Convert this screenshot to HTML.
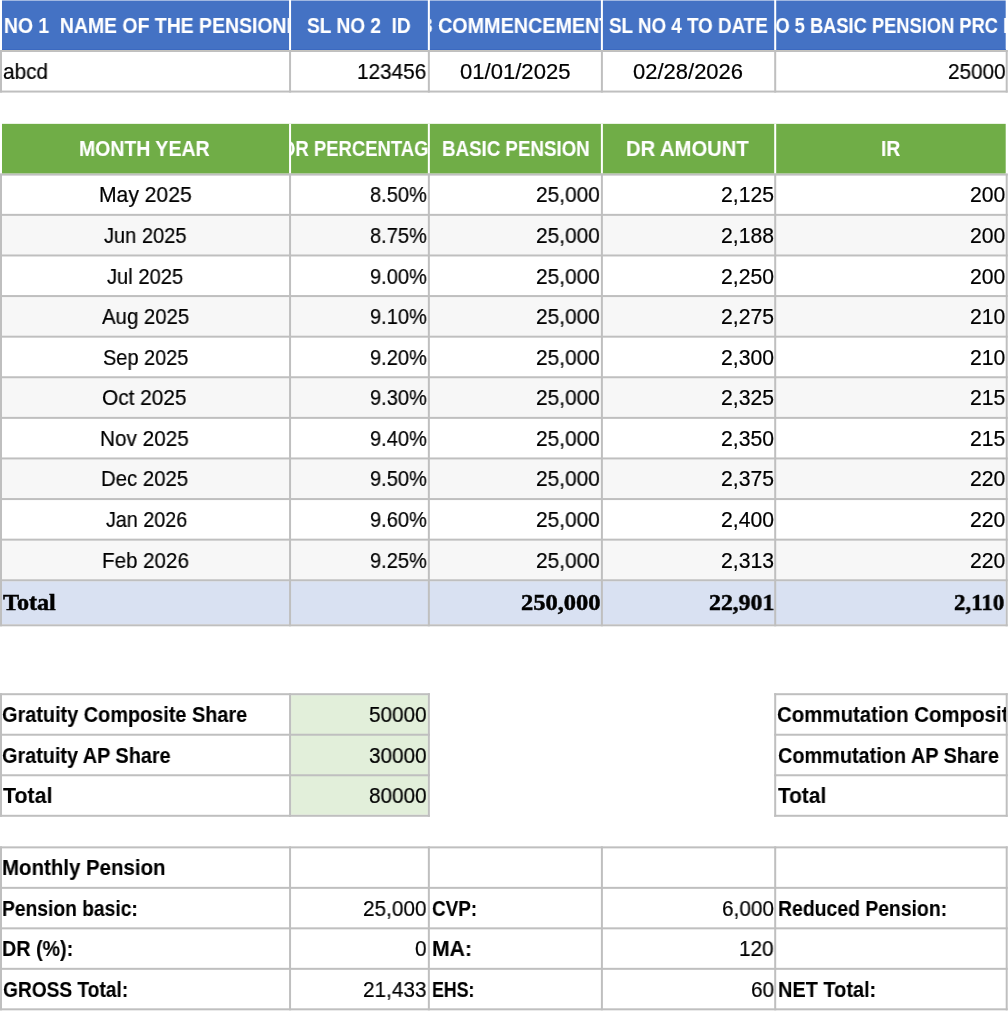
<!DOCTYPE html>
<html><head><meta charset="utf-8"><style>
html,body{margin:0;padding:0;background:#fff;width:1008px;height:1011px;overflow:hidden;position:relative;font-family:"Liberation Sans",sans-serif}
.c{position:absolute;overflow:hidden}
.t{position:absolute;white-space:pre;will-change:transform;transform-origin:0 0}
.m{display:inline-block;width:0;height:0}
</style></head><body>
<svg width="1008" height="1011" style="position:absolute;left:0;top:0"><rect x="2.00" y="0.50" width="1003.70" height="49.50" fill="#4472c4"/><rect x="2.00" y="49.00" width="1003.70" height="1.00" fill="#3b69c0"/><rect x="289.05" y="0.00" width="2.00" height="50.00" fill="#fff"/><rect x="427.85" y="0.00" width="2.00" height="50.00" fill="#fff"/><rect x="600.90" y="0.00" width="2.00" height="50.00" fill="#fff"/><rect x="774.20" y="0.00" width="2.00" height="50.00" fill="#fff"/><rect x="0.00" y="50.00" width="1007.70" height="1.00" fill="#c6c4be"/><rect x="0.00" y="51.00" width="1007.70" height="1.00" fill="#bfbfbf"/><rect x="0.00" y="90.56" width="1007.70" height="2.00" fill="#bfbfbf"/><rect x="0.00" y="50.00" width="2.00" height="42.56" fill="#bfbfbf"/><rect x="289.05" y="50.00" width="2.00" height="42.56" fill="#bfbfbf"/><rect x="427.85" y="50.00" width="2.00" height="42.56" fill="#bfbfbf"/><rect x="600.90" y="50.00" width="2.00" height="42.56" fill="#bfbfbf"/><rect x="774.20" y="50.00" width="2.00" height="42.56" fill="#bfbfbf"/><rect x="1005.70" y="50.00" width="2.00" height="42.56" fill="#bfbfbf"/><rect x="2.00" y="123.85" width="1003.70" height="49.75" fill="#70ad47"/><rect x="289.05" y="123.85" width="2.00" height="49.75" fill="#fff"/><rect x="427.85" y="123.85" width="2.00" height="49.75" fill="#fff"/><rect x="600.90" y="123.85" width="2.00" height="49.75" fill="#fff"/><rect x="774.20" y="123.85" width="2.00" height="49.75" fill="#fff"/><rect x="2.00" y="215.86" width="1003.70" height="38.60" fill="#f7f7f7"/><rect x="2.00" y="297.06" width="1003.70" height="38.60" fill="#f7f7f7"/><rect x="2.00" y="378.26" width="1003.70" height="38.60" fill="#f7f7f7"/><rect x="2.00" y="459.46" width="1003.70" height="38.60" fill="#f7f7f7"/><rect x="2.00" y="540.66" width="1003.70" height="38.60" fill="#f7f7f7"/><rect x="2.00" y="581.26" width="1003.70" height="43.04" fill="#d9e1f2"/><rect x="0.00" y="173.60" width="1007.70" height="2.00" fill="#bfbfbf"/><rect x="0.00" y="213.86" width="1007.70" height="2.00" fill="#bfbfbf"/><rect x="0.00" y="254.46" width="1007.70" height="2.00" fill="#bfbfbf"/><rect x="0.00" y="295.06" width="1007.70" height="2.00" fill="#bfbfbf"/><rect x="0.00" y="335.66" width="1007.70" height="2.00" fill="#bfbfbf"/><rect x="0.00" y="376.26" width="1007.70" height="2.00" fill="#bfbfbf"/><rect x="0.00" y="416.86" width="1007.70" height="2.00" fill="#bfbfbf"/><rect x="0.00" y="457.46" width="1007.70" height="2.00" fill="#bfbfbf"/><rect x="0.00" y="498.06" width="1007.70" height="2.00" fill="#bfbfbf"/><rect x="0.00" y="538.66" width="1007.70" height="2.00" fill="#bfbfbf"/><rect x="0.00" y="579.26" width="1007.70" height="2.00" fill="#bfbfbf"/><rect x="0.00" y="624.30" width="1007.70" height="2.00" fill="#bfbfbf"/><rect x="0.00" y="173.60" width="2.00" height="452.70" fill="#bfbfbf"/><rect x="289.05" y="173.60" width="2.00" height="452.70" fill="#bfbfbf"/><rect x="427.85" y="173.60" width="2.00" height="452.70" fill="#bfbfbf"/><rect x="600.90" y="173.60" width="2.00" height="452.70" fill="#bfbfbf"/><rect x="774.20" y="173.60" width="2.00" height="452.70" fill="#bfbfbf"/><rect x="1005.70" y="173.60" width="2.00" height="452.70" fill="#bfbfbf"/><rect x="291.05" y="695.20" width="136.80" height="119.59" fill="#e2efda"/><rect x="0.00" y="693.20" width="429.85" height="2.00" fill="#bfbfbf"/><rect x="774.20" y="693.20" width="233.50" height="2.00" fill="#bfbfbf"/><rect x="0.00" y="733.73" width="429.85" height="2.00" fill="#bfbfbf"/><rect x="774.20" y="733.73" width="233.50" height="2.00" fill="#bfbfbf"/><rect x="0.00" y="774.26" width="429.85" height="2.00" fill="#bfbfbf"/><rect x="774.20" y="774.26" width="233.50" height="2.00" fill="#bfbfbf"/><rect x="0.00" y="814.79" width="429.85" height="2.00" fill="#bfbfbf"/><rect x="774.20" y="814.79" width="233.50" height="2.00" fill="#bfbfbf"/><rect x="0.00" y="693.20" width="2.00" height="123.59" fill="#bfbfbf"/><rect x="289.05" y="693.20" width="2.00" height="123.59" fill="#bfbfbf"/><rect x="427.85" y="693.20" width="2.00" height="123.59" fill="#bfbfbf"/><rect x="774.20" y="693.20" width="2.00" height="123.59" fill="#bfbfbf"/><rect x="1005.70" y="693.20" width="2.00" height="123.59" fill="#bfbfbf"/><rect x="0.00" y="846.36" width="1007.70" height="2.00" fill="#bfbfbf"/><rect x="0.00" y="886.85" width="1007.70" height="2.00" fill="#bfbfbf"/><rect x="0.00" y="927.34" width="1007.70" height="2.00" fill="#bfbfbf"/><rect x="0.00" y="967.83" width="1007.70" height="2.00" fill="#bfbfbf"/><rect x="0.00" y="1008.32" width="1007.70" height="2.00" fill="#bfbfbf"/><rect x="0.00" y="846.36" width="2.00" height="163.96" fill="#bfbfbf"/><rect x="289.05" y="846.36" width="2.00" height="163.96" fill="#bfbfbf"/><rect x="427.85" y="846.36" width="2.00" height="163.96" fill="#bfbfbf"/><rect x="600.90" y="846.36" width="2.00" height="163.96" fill="#bfbfbf"/><rect x="774.20" y="846.36" width="2.00" height="163.96" fill="#bfbfbf"/><rect x="1005.70" y="846.36" width="2.00" height="163.96" fill="#bfbfbf"/></svg>
<div class="c" style="left:2px;top:0px;width:287px;height:50px"><span class="t" style="left:-27.87px;top:11px;font:bold 21.43px 'Liberation Sans', sans-serif;line-height:30px;color:#fff;-webkit-text-stroke:0.1px #fff;transform:scaleX(0.9062)">SL NO 1  NAME OF THE PENSIONER</span></div>
<div class="c" style="left:291px;top:0px;width:137px;height:50px"><span class="t" style="left:16.12px;top:11px;font:bold 21.43px 'Liberation Sans', sans-serif;line-height:30px;color:#fff;-webkit-text-stroke:0.1px #fff;transform:scaleX(0.8921)">SL NO 2  ID</span></div>
<div class="c" style="left:430px;top:0px;width:171px;height:50px"><span class="t" style="left:-73.57px;top:11px;font:bold 21.43px 'Liberation Sans', sans-serif;line-height:30px;color:#fff;-webkit-text-stroke:0.1px #fff;transform:scaleX(0.9224)">SL NO 3 COMMENCEMENT DATE</span></div>
<div class="c" style="left:603px;top:0px;width:171px;height:50px"><span class="t" style="left:5.62px;top:11px;font:bold 21.43px 'Liberation Sans', sans-serif;line-height:30px;color:#fff;-webkit-text-stroke:0.1px #fff;transform:scaleX(0.8771)">SL NO 4 TO DATE</span></div>
<div class="c" style="left:776px;top:0px;width:230px;height:50px"><span class="t" style="left:-42.06px;top:11px;font:bold 21.43px 'Liberation Sans', sans-serif;line-height:30px;color:#fff;-webkit-text-stroke:0.1px #fff;transform:scaleX(0.8540)">SL NO 5 BASIC PENSION PRC DATE</span></div>
<div class="c" style="left:2px;top:52px;width:287px;height:39px"><span class="t" style="left:1.07px;top:5px;font:21.16px 'Liberation Sans', sans-serif;line-height:30px;color:#000;-webkit-text-stroke:0.2px #000;transform:scaleX(0.9829)">abcd</span></div>
<div class="c" style="left:291px;top:52px;width:137px;height:39px"><span class="t" style="left:66.25px;top:5px;font:21.16px 'Liberation Sans', sans-serif;line-height:30px;color:#000;-webkit-text-stroke:0.2px #000;transform:scaleX(0.9816)">123456</span></div>
<div class="c" style="left:430px;top:52px;width:171px;height:39px"><span class="t" style="left:29.54px;top:5px;font:21.16px 'Liberation Sans', sans-serif;line-height:30px;color:#000;-webkit-text-stroke:0.2px #000;transform:scaleX(1.0431)">01/01/2025</span></div>
<div class="c" style="left:603px;top:52px;width:171px;height:39px"><span class="t" style="left:30.24px;top:5px;font:21.16px 'Liberation Sans', sans-serif;line-height:30px;color:#000;-webkit-text-stroke:0.2px #000;transform:scaleX(1.0392)">02/28/2026</span></div>
<div class="c" style="left:776px;top:52px;width:230px;height:39px"><span class="t" style="left:171.59px;top:5px;font:21.16px 'Liberation Sans', sans-serif;line-height:30px;color:#000;-webkit-text-stroke:0.2px #000;transform:scaleX(0.9800)">25000</span></div>
<div class="c" style="left:2px;top:124px;width:287px;height:49px"><span class="t" style="left:77.33px;top:10px;font:bold 21.43px 'Liberation Sans', sans-serif;line-height:30px;color:#fff;-webkit-text-stroke:0.1px #fff;transform:scaleX(0.9088)">MONTH YEAR</span></div>
<div class="c" style="left:291px;top:124px;width:137px;height:49px"><span class="t" style="left:-9.25px;top:10px;font:bold 21.43px 'Liberation Sans', sans-serif;line-height:30px;color:#fff;-webkit-text-stroke:0.1px #fff;transform:scaleX(0.8620)">DR PERCENTAGE</span></div>
<div class="c" style="left:430px;top:124px;width:171px;height:49px"><span class="t" style="left:11.88px;top:10px;font:bold 21.43px 'Liberation Sans', sans-serif;line-height:30px;color:#fff;-webkit-text-stroke:0.1px #fff;transform:scaleX(0.8735)">BASIC PENSION</span></div>
<div class="c" style="left:603px;top:124px;width:171px;height:49px"><span class="t" style="left:23.29px;top:10px;font:bold 21.43px 'Liberation Sans', sans-serif;line-height:30px;color:#fff;-webkit-text-stroke:0.1px #fff;transform:scaleX(0.9434)">DR AMOUNT</span></div>
<div class="c" style="left:776px;top:124px;width:230px;height:49px"><span class="t" style="left:105.45px;top:10px;font:bold 21.43px 'Liberation Sans', sans-serif;line-height:30px;color:#fff;-webkit-text-stroke:0.1px #fff;transform:scaleX(0.8953)">IR</span></div>
<div class="c" style="left:2px;top:176px;width:287px;height:38px"><span class="t" style="left:96.51px;top:4px;font:21.16px 'Liberation Sans', sans-serif;line-height:30px;color:#000;-webkit-text-stroke:0.2px #000;transform:scaleX(0.9971)">May 2025</span></div>
<div class="c" style="left:291px;top:176px;width:137px;height:38px"><span class="t" style="left:78.79px;top:4px;font:21.16px 'Liberation Sans', sans-serif;line-height:30px;color:#000;-webkit-text-stroke:0.2px #000;transform:scaleX(0.9450)">8.50%</span></div>
<div class="c" style="left:430px;top:176px;width:171px;height:38px"><span class="t" style="left:105.61px;top:4px;font:21.16px 'Liberation Sans', sans-serif;line-height:30px;color:#000;-webkit-text-stroke:0.2px #000;transform:scaleX(0.9850)">25,000</span></div>
<div class="c" style="left:603px;top:176px;width:171px;height:38px"><span class="t" style="left:118.11px;top:4px;font:21.16px 'Liberation Sans', sans-serif;line-height:30px;color:#000;-webkit-text-stroke:0.2px #000;transform:scaleX(1.0000)">2,125</span></div>
<div class="c" style="left:776px;top:176px;width:230px;height:38px"><span class="t" style="left:194.36px;top:4px;font:21.16px 'Liberation Sans', sans-serif;line-height:30px;color:#000;-webkit-text-stroke:0.2px #000;transform:scaleX(1.0000)">200</span></div>
<div class="c" style="left:2px;top:216px;width:287px;height:38px"><span class="t" style="left:102.00px;top:5px;font:21.16px 'Liberation Sans', sans-serif;line-height:30px;color:#000;-webkit-text-stroke:0.2px #000;transform:scaleX(0.9479)">Jun 2025</span></div>
<div class="c" style="left:291px;top:216px;width:137px;height:38px"><span class="t" style="left:78.79px;top:5px;font:21.16px 'Liberation Sans', sans-serif;line-height:30px;color:#000;-webkit-text-stroke:0.2px #000;transform:scaleX(0.9450)">8.75%</span></div>
<div class="c" style="left:430px;top:216px;width:171px;height:38px"><span class="t" style="left:105.61px;top:5px;font:21.16px 'Liberation Sans', sans-serif;line-height:30px;color:#000;-webkit-text-stroke:0.2px #000;transform:scaleX(0.9850)">25,000</span></div>
<div class="c" style="left:603px;top:216px;width:171px;height:38px"><span class="t" style="left:118.11px;top:5px;font:21.16px 'Liberation Sans', sans-serif;line-height:30px;color:#000;-webkit-text-stroke:0.2px #000;transform:scaleX(1.0000)">2,188</span></div>
<div class="c" style="left:776px;top:216px;width:230px;height:38px"><span class="t" style="left:194.36px;top:5px;font:21.16px 'Liberation Sans', sans-serif;line-height:30px;color:#000;-webkit-text-stroke:0.2px #000;transform:scaleX(1.0000)">200</span></div>
<div class="c" style="left:2px;top:256px;width:287px;height:39px"><span class="t" style="left:105.10px;top:6px;font:21.16px 'Liberation Sans', sans-serif;line-height:30px;color:#000;-webkit-text-stroke:0.2px #000;transform:scaleX(0.9516)">Jul 2025</span></div>
<div class="c" style="left:291px;top:256px;width:137px;height:39px"><span class="t" style="left:78.79px;top:6px;font:21.16px 'Liberation Sans', sans-serif;line-height:30px;color:#000;-webkit-text-stroke:0.2px #000;transform:scaleX(0.9450)">9.00%</span></div>
<div class="c" style="left:430px;top:256px;width:171px;height:39px"><span class="t" style="left:105.61px;top:6px;font:21.16px 'Liberation Sans', sans-serif;line-height:30px;color:#000;-webkit-text-stroke:0.2px #000;transform:scaleX(0.9850)">25,000</span></div>
<div class="c" style="left:603px;top:256px;width:171px;height:39px"><span class="t" style="left:118.11px;top:6px;font:21.16px 'Liberation Sans', sans-serif;line-height:30px;color:#000;-webkit-text-stroke:0.2px #000;transform:scaleX(1.0000)">2,250</span></div>
<div class="c" style="left:776px;top:256px;width:230px;height:39px"><span class="t" style="left:194.36px;top:6px;font:21.16px 'Liberation Sans', sans-serif;line-height:30px;color:#000;-webkit-text-stroke:0.2px #000;transform:scaleX(1.0000)">200</span></div>
<div class="c" style="left:2px;top:297px;width:287px;height:39px"><span class="t" style="left:100.40px;top:5px;font:21.16px 'Liberation Sans', sans-serif;line-height:30px;color:#000;-webkit-text-stroke:0.2px #000;transform:scaleX(0.9629)">Aug 2025</span></div>
<div class="c" style="left:291px;top:297px;width:137px;height:39px"><span class="t" style="left:78.79px;top:5px;font:21.16px 'Liberation Sans', sans-serif;line-height:30px;color:#000;-webkit-text-stroke:0.2px #000;transform:scaleX(0.9450)">9.10%</span></div>
<div class="c" style="left:430px;top:297px;width:171px;height:39px"><span class="t" style="left:105.61px;top:5px;font:21.16px 'Liberation Sans', sans-serif;line-height:30px;color:#000;-webkit-text-stroke:0.2px #000;transform:scaleX(0.9850)">25,000</span></div>
<div class="c" style="left:603px;top:297px;width:171px;height:39px"><span class="t" style="left:118.11px;top:5px;font:21.16px 'Liberation Sans', sans-serif;line-height:30px;color:#000;-webkit-text-stroke:0.2px #000;transform:scaleX(1.0000)">2,275</span></div>
<div class="c" style="left:776px;top:297px;width:230px;height:39px"><span class="t" style="left:194.36px;top:5px;font:21.16px 'Liberation Sans', sans-serif;line-height:30px;color:#000;-webkit-text-stroke:0.2px #000;transform:scaleX(1.0000)">210</span></div>
<div class="c" style="left:2px;top:338px;width:287px;height:38px"><span class="t" style="left:100.80px;top:5px;font:21.16px 'Liberation Sans', sans-serif;line-height:30px;color:#000;-webkit-text-stroke:0.2px #000;transform:scaleX(0.9428)">Sep 2025</span></div>
<div class="c" style="left:291px;top:338px;width:137px;height:38px"><span class="t" style="left:78.79px;top:5px;font:21.16px 'Liberation Sans', sans-serif;line-height:30px;color:#000;-webkit-text-stroke:0.2px #000;transform:scaleX(0.9450)">9.20%</span></div>
<div class="c" style="left:430px;top:338px;width:171px;height:38px"><span class="t" style="left:105.61px;top:5px;font:21.16px 'Liberation Sans', sans-serif;line-height:30px;color:#000;-webkit-text-stroke:0.2px #000;transform:scaleX(0.9850)">25,000</span></div>
<div class="c" style="left:603px;top:338px;width:171px;height:38px"><span class="t" style="left:118.11px;top:5px;font:21.16px 'Liberation Sans', sans-serif;line-height:30px;color:#000;-webkit-text-stroke:0.2px #000;transform:scaleX(1.0000)">2,300</span></div>
<div class="c" style="left:776px;top:338px;width:230px;height:38px"><span class="t" style="left:194.36px;top:5px;font:21.16px 'Liberation Sans', sans-serif;line-height:30px;color:#000;-webkit-text-stroke:0.2px #000;transform:scaleX(1.0000)">210</span></div>
<div class="c" style="left:2px;top:378px;width:287px;height:39px"><span class="t" style="left:100.47px;top:5px;font:21.16px 'Liberation Sans', sans-serif;line-height:30px;color:#000;-webkit-text-stroke:0.2px #000;transform:scaleX(0.9851)">Oct 2025</span></div>
<div class="c" style="left:291px;top:378px;width:137px;height:39px"><span class="t" style="left:78.79px;top:5px;font:21.16px 'Liberation Sans', sans-serif;line-height:30px;color:#000;-webkit-text-stroke:0.2px #000;transform:scaleX(0.9450)">9.30%</span></div>
<div class="c" style="left:430px;top:378px;width:171px;height:39px"><span class="t" style="left:105.61px;top:5px;font:21.16px 'Liberation Sans', sans-serif;line-height:30px;color:#000;-webkit-text-stroke:0.2px #000;transform:scaleX(0.9850)">25,000</span></div>
<div class="c" style="left:603px;top:378px;width:171px;height:39px"><span class="t" style="left:118.11px;top:5px;font:21.16px 'Liberation Sans', sans-serif;line-height:30px;color:#000;-webkit-text-stroke:0.2px #000;transform:scaleX(1.0000)">2,325</span></div>
<div class="c" style="left:776px;top:378px;width:230px;height:39px"><span class="t" style="left:194.36px;top:5px;font:21.16px 'Liberation Sans', sans-serif;line-height:30px;color:#000;-webkit-text-stroke:0.2px #000;transform:scaleX(1.0000)">215</span></div>
<div class="c" style="left:2px;top:419px;width:287px;height:38px"><span class="t" style="left:98.44px;top:5px;font:21.16px 'Liberation Sans', sans-serif;line-height:30px;color:#000;-webkit-text-stroke:0.2px #000;transform:scaleX(0.9805)">Nov 2025</span></div>
<div class="c" style="left:291px;top:419px;width:137px;height:38px"><span class="t" style="left:78.79px;top:5px;font:21.16px 'Liberation Sans', sans-serif;line-height:30px;color:#000;-webkit-text-stroke:0.2px #000;transform:scaleX(0.9450)">9.40%</span></div>
<div class="c" style="left:430px;top:419px;width:171px;height:38px"><span class="t" style="left:105.61px;top:5px;font:21.16px 'Liberation Sans', sans-serif;line-height:30px;color:#000;-webkit-text-stroke:0.2px #000;transform:scaleX(0.9850)">25,000</span></div>
<div class="c" style="left:603px;top:419px;width:171px;height:38px"><span class="t" style="left:118.11px;top:5px;font:21.16px 'Liberation Sans', sans-serif;line-height:30px;color:#000;-webkit-text-stroke:0.2px #000;transform:scaleX(1.0000)">2,350</span></div>
<div class="c" style="left:776px;top:419px;width:230px;height:38px"><span class="t" style="left:194.36px;top:5px;font:21.16px 'Liberation Sans', sans-serif;line-height:30px;color:#000;-webkit-text-stroke:0.2px #000;transform:scaleX(1.0000)">215</span></div>
<div class="c" style="left:2px;top:459px;width:287px;height:39px"><span class="t" style="left:99.07px;top:5px;font:21.16px 'Liberation Sans', sans-serif;line-height:30px;color:#000;-webkit-text-stroke:0.2px #000;transform:scaleX(0.9623)">Dec 2025</span></div>
<div class="c" style="left:291px;top:459px;width:137px;height:39px"><span class="t" style="left:78.79px;top:5px;font:21.16px 'Liberation Sans', sans-serif;line-height:30px;color:#000;-webkit-text-stroke:0.2px #000;transform:scaleX(0.9450)">9.50%</span></div>
<div class="c" style="left:430px;top:459px;width:171px;height:39px"><span class="t" style="left:105.61px;top:5px;font:21.16px 'Liberation Sans', sans-serif;line-height:30px;color:#000;-webkit-text-stroke:0.2px #000;transform:scaleX(0.9850)">25,000</span></div>
<div class="c" style="left:603px;top:459px;width:171px;height:39px"><span class="t" style="left:118.11px;top:5px;font:21.16px 'Liberation Sans', sans-serif;line-height:30px;color:#000;-webkit-text-stroke:0.2px #000;transform:scaleX(1.0000)">2,375</span></div>
<div class="c" style="left:776px;top:459px;width:230px;height:39px"><span class="t" style="left:194.36px;top:5px;font:21.16px 'Liberation Sans', sans-serif;line-height:30px;color:#000;-webkit-text-stroke:0.2px #000;transform:scaleX(1.0000)">220</span></div>
<div class="c" style="left:2px;top:500px;width:287px;height:39px"><span class="t" style="left:103.50px;top:5px;font:21.16px 'Liberation Sans', sans-serif;line-height:30px;color:#000;-webkit-text-stroke:0.2px #000;transform:scaleX(0.9328)">Jan 2026</span></div>
<div class="c" style="left:291px;top:500px;width:137px;height:39px"><span class="t" style="left:78.79px;top:5px;font:21.16px 'Liberation Sans', sans-serif;line-height:30px;color:#000;-webkit-text-stroke:0.2px #000;transform:scaleX(0.9450)">9.60%</span></div>
<div class="c" style="left:430px;top:500px;width:171px;height:39px"><span class="t" style="left:105.61px;top:5px;font:21.16px 'Liberation Sans', sans-serif;line-height:30px;color:#000;-webkit-text-stroke:0.2px #000;transform:scaleX(0.9850)">25,000</span></div>
<div class="c" style="left:603px;top:500px;width:171px;height:39px"><span class="t" style="left:118.11px;top:5px;font:21.16px 'Liberation Sans', sans-serif;line-height:30px;color:#000;-webkit-text-stroke:0.2px #000;transform:scaleX(1.0000)">2,400</span></div>
<div class="c" style="left:776px;top:500px;width:230px;height:39px"><span class="t" style="left:194.36px;top:5px;font:21.16px 'Liberation Sans', sans-serif;line-height:30px;color:#000;-webkit-text-stroke:0.2px #000;transform:scaleX(1.0000)">220</span></div>
<div class="c" style="left:2px;top:541px;width:287px;height:38px"><span class="t" style="left:99.96px;top:5px;font:21.16px 'Liberation Sans', sans-serif;line-height:30px;color:#000;-webkit-text-stroke:0.2px #000;transform:scaleX(0.9718)">Feb 2026</span></div>
<div class="c" style="left:291px;top:541px;width:137px;height:38px"><span class="t" style="left:78.79px;top:5px;font:21.16px 'Liberation Sans', sans-serif;line-height:30px;color:#000;-webkit-text-stroke:0.2px #000;transform:scaleX(0.9450)">9.25%</span></div>
<div class="c" style="left:430px;top:541px;width:171px;height:38px"><span class="t" style="left:105.61px;top:5px;font:21.16px 'Liberation Sans', sans-serif;line-height:30px;color:#000;-webkit-text-stroke:0.2px #000;transform:scaleX(0.9850)">25,000</span></div>
<div class="c" style="left:603px;top:541px;width:171px;height:38px"><span class="t" style="left:118.11px;top:5px;font:21.16px 'Liberation Sans', sans-serif;line-height:30px;color:#000;-webkit-text-stroke:0.2px #000;transform:scaleX(1.0000)">2,313</span></div>
<div class="c" style="left:776px;top:541px;width:230px;height:38px"><span class="t" style="left:194.36px;top:5px;font:21.16px 'Liberation Sans', sans-serif;line-height:30px;color:#000;-webkit-text-stroke:0.2px #000;transform:scaleX(1.0000)">220</span></div>
<div class="c" style="left:2px;top:581px;width:287px;height:43px"><span class="t" style="left:0.76px;top:6px;font:bold 23.85px 'Liberation Serif', serif;line-height:30px;color:#000;-webkit-text-stroke:0.5px #000;transform:scaleX(1.0135)">Total</span></div>
<div class="c" style="left:430px;top:581px;width:171px;height:43px"><span class="t" style="left:90.92px;top:6px;font:bold 23.85px 'Liberation Serif', serif;line-height:30px;color:#000;-webkit-text-stroke:0.5px #000;transform:scaleX(1.0273)">250,000</span></div>
<div class="c" style="left:603px;top:581px;width:171px;height:43px"><span class="t" style="left:105.95px;top:6px;font:bold 23.85px 'Liberation Serif', serif;line-height:30px;color:#000;-webkit-text-stroke:0.5px #000;transform:scaleX(0.9948)">22,901</span></div>
<div class="c" style="left:776px;top:581px;width:230px;height:43px"><span class="t" style="left:178.29px;top:6px;font:bold 23.85px 'Liberation Serif', serif;line-height:30px;color:#000;-webkit-text-stroke:0.5px #000;transform:scaleX(0.9592)">2,110</span></div>
<div class="c" style="left:2px;top:695px;width:287px;height:39px"><span class="t" style="left:0.30px;top:5px;font:bold 21.43px 'Liberation Sans', sans-serif;line-height:30px;color:#000;-webkit-text-stroke:0.1px #000;transform:scaleX(0.9280)">Gratuity Composite Share</span></div>
<div class="c" style="left:291px;top:695px;width:137px;height:39px"><span class="t" style="left:78.09px;top:5px;font:21.16px 'Liberation Sans', sans-serif;line-height:30px;color:#000;-webkit-text-stroke:0.2px #000;transform:scaleX(0.9800)">50000</span></div>
<div class="c" style="left:776px;top:695px;width:230px;height:39px"><span class="t" style="left:1.48px;top:5px;font:bold 21.43px 'Liberation Sans', sans-serif;line-height:30px;color:#000;-webkit-text-stroke:0.1px #000;transform:scaleX(0.9530)">Commutation Composite Share</span></div>
<div class="c" style="left:2px;top:736px;width:287px;height:38px"><span class="t" style="left:0.31px;top:5px;font:bold 21.43px 'Liberation Sans', sans-serif;line-height:30px;color:#000;-webkit-text-stroke:0.1px #000;transform:scaleX(0.9254)">Gratuity AP Share</span></div>
<div class="c" style="left:291px;top:736px;width:137px;height:38px"><span class="t" style="left:78.09px;top:5px;font:21.16px 'Liberation Sans', sans-serif;line-height:30px;color:#000;-webkit-text-stroke:0.2px #000;transform:scaleX(0.9800)">30000</span></div>
<div class="c" style="left:776px;top:736px;width:230px;height:38px"><span class="t" style="left:1.50px;top:5px;font:bold 21.43px 'Liberation Sans', sans-serif;line-height:30px;color:#000;-webkit-text-stroke:0.1px #000;transform:scaleX(0.9277)">Commutation AP Share</span></div>
<div class="c" style="left:2px;top:776px;width:287px;height:39px"><span class="t" style="left:0.89px;top:5px;font:bold 21.43px 'Liberation Sans', sans-serif;line-height:30px;color:#000;-webkit-text-stroke:0.1px #000;transform:scaleX(0.9953)">Total</span></div>
<div class="c" style="left:291px;top:776px;width:137px;height:39px"><span class="t" style="left:78.09px;top:5px;font:21.16px 'Liberation Sans', sans-serif;line-height:30px;color:#000;-webkit-text-stroke:0.2px #000;transform:scaleX(0.9800)">80000</span></div>
<div class="c" style="left:776px;top:776px;width:230px;height:39px"><span class="t" style="left:2.09px;top:5px;font:bold 21.43px 'Liberation Sans', sans-serif;line-height:30px;color:#000;-webkit-text-stroke:0.1px #000;transform:scaleX(0.9702)">Total</span></div>
<div class="c" style="left:2px;top:848px;width:287px;height:39px"><span class="t" style="left:0.37px;top:5px;font:bold 21.43px 'Liberation Sans', sans-serif;line-height:30px;color:#000;-webkit-text-stroke:0.1px #000;transform:scaleX(0.9542)">Monthly Pension</span></div>
<div class="c" style="left:2px;top:889px;width:287px;height:38px"><span class="t" style="left:0.45px;top:5px;font:bold 21.43px 'Liberation Sans', sans-serif;line-height:30px;color:#000;-webkit-text-stroke:0.1px #000;transform:scaleX(0.8982)">Pension basic:</span></div>
<div class="c" style="left:291px;top:889px;width:137px;height:38px"><span class="t" style="left:72.33px;top:5px;font:21.16px 'Liberation Sans', sans-serif;line-height:30px;color:#000;-webkit-text-stroke:0.2px #000;transform:scaleX(0.9800)">25,000</span></div>
<div class="c" style="left:430px;top:889px;width:171px;height:38px"><span class="t" style="left:2.04px;top:5px;font:bold 21.43px 'Liberation Sans', sans-serif;line-height:30px;color:#000;-webkit-text-stroke:0.1px #000;transform:scaleX(0.8811)">CVP:</span></div>
<div class="c" style="left:603px;top:889px;width:171px;height:38px"><span class="t" style="left:118.86px;top:5px;font:21.16px 'Liberation Sans', sans-serif;line-height:30px;color:#000;-webkit-text-stroke:0.2px #000;transform:scaleX(0.9800)">6,000</span></div>
<div class="c" style="left:776px;top:889px;width:230px;height:38px"><span class="t" style="left:1.64px;top:5px;font:bold 21.43px 'Liberation Sans', sans-serif;line-height:30px;color:#000;-webkit-text-stroke:0.1px #000;transform:scaleX(0.9050)">Reduced Pension:</span></div>
<div class="c" style="left:2px;top:929px;width:287px;height:39px"><span class="t" style="left:0.42px;top:5px;font:bold 21.43px 'Liberation Sans', sans-serif;line-height:30px;color:#000;-webkit-text-stroke:0.1px #000;transform:scaleX(0.9206)">DR (%):</span></div>
<div class="c" style="left:291px;top:929px;width:137px;height:39px"><span class="t" style="left:124.22px;top:5px;font:21.16px 'Liberation Sans', sans-serif;line-height:30px;color:#000;-webkit-text-stroke:0.2px #000;transform:scaleX(0.9800)">0</span></div>
<div class="c" style="left:430px;top:929px;width:171px;height:39px"><span class="t" style="left:1.53px;top:5px;font:bold 21.43px 'Liberation Sans', sans-serif;line-height:30px;color:#000;-webkit-text-stroke:0.1px #000;transform:scaleX(0.9897)">MA:</span></div>
<div class="c" style="left:603px;top:929px;width:171px;height:39px"><span class="t" style="left:136.15px;top:5px;font:21.16px 'Liberation Sans', sans-serif;line-height:30px;color:#000;-webkit-text-stroke:0.2px #000;transform:scaleX(0.9800)">120</span></div>
<div class="c" style="left:2px;top:970px;width:287px;height:38px"><span class="t" style="left:0.83px;top:5px;font:bold 21.43px 'Liberation Sans', sans-serif;line-height:30px;color:#000;-webkit-text-stroke:0.1px #000;transform:scaleX(0.8934)">GROSS Total:</span></div>
<div class="c" style="left:291px;top:970px;width:137px;height:38px"><span class="t" style="left:72.33px;top:5px;font:21.16px 'Liberation Sans', sans-serif;line-height:30px;color:#000;-webkit-text-stroke:0.2px #000;transform:scaleX(0.9800)">21,433</span></div>
<div class="c" style="left:430px;top:970px;width:171px;height:38px"><span class="t" style="left:1.73px;top:5px;font:bold 21.43px 'Liberation Sans', sans-serif;line-height:30px;color:#000;-webkit-text-stroke:0.1px #000;transform:scaleX(0.8285)">EHS:</span></div>
<div class="c" style="left:603px;top:970px;width:171px;height:38px"><span class="t" style="left:147.68px;top:5px;font:21.16px 'Liberation Sans', sans-serif;line-height:30px;color:#000;-webkit-text-stroke:0.2px #000;transform:scaleX(0.9800)">60</span></div>
<div class="c" style="left:776px;top:970px;width:230px;height:38px"><span class="t" style="left:1.60px;top:5px;font:bold 21.43px 'Liberation Sans', sans-serif;line-height:30px;color:#000;-webkit-text-stroke:0.1px #000;transform:scaleX(0.9309)">NET Total:</span></div>
</body></html>
